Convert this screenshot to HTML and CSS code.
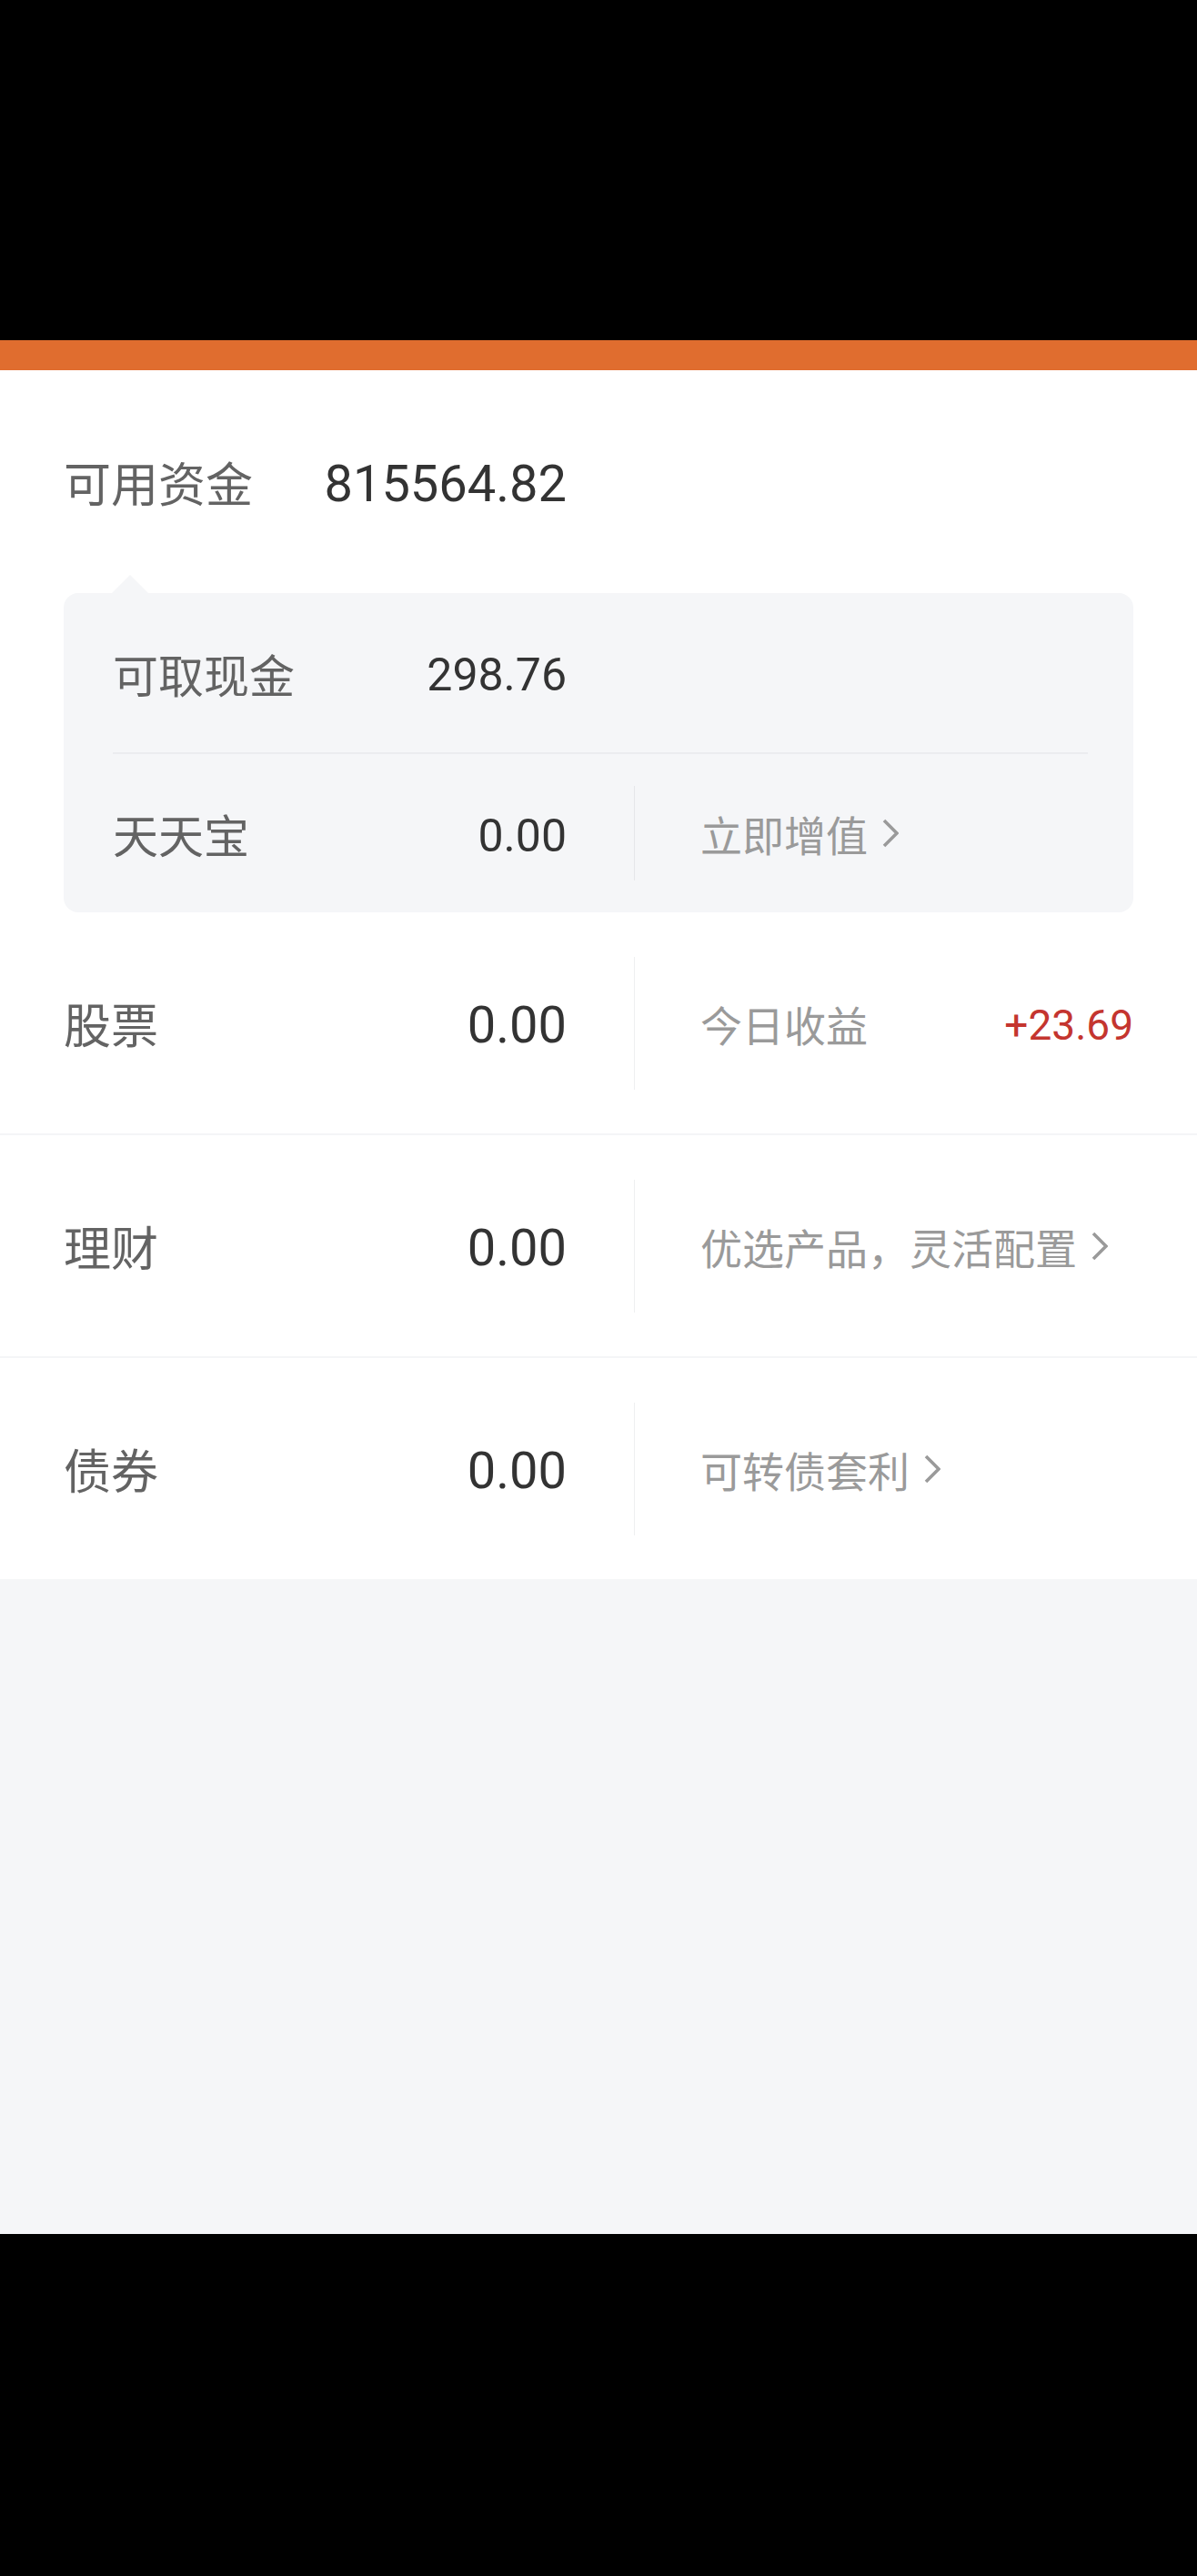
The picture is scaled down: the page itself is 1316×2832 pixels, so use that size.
FILE: index.html
```html
<!DOCTYPE html>
<html lang="zh-CN">

<head>
    <meta charset="UTF-8">
    <title>资产</title>
    <link rel="stylesheet" href="styles.css">
</head>

<body>
    <div class="status-bar"></div>
    <div class="top-line"></div>
    <div class="assets">
        <div class="total">
            <div class="main">
                <span class="name">可用资金</span>
                <span class="num">815564.82</span>
            </div>
        </div>
        <div class="cash-card">
            <div class="card-row">
                <div class="main card-main">
                    <span class="name name-sm">可取现金</span>
                    <span class="num num-sm">298.76</span>
                </div>
            </div>
            <div class="card-row">
                <div class="main card-main">
                    <span class="name name-sm">天天宝</span>
                    <span class="num num-sm">0.00</span>
                </div>
                <i class="vline vline-sm"></i>
                <a class="link">立即增值<svg width="18" height="32" viewBox="0 0 18 32"><polyline points="2,2 16,16 2,30" fill="none" stroke="#9a9a9a" stroke-width="3.6"/></svg></a>
            </div>
        </div>
        <div class="item">
            <div class="main">
                <span class="name">股票</span>
                <span class="num">0.00</span>
            </div>
            <i class="vline"></i>
            <div class="extra">
                <span>今日收益</span>
                <span class="gain">+23.69</span>
            </div>
        </div>
        <div class="item">
            <div class="main">
                <span class="name">理财</span>
                <span class="num">0.00</span>
            </div>
            <i class="vline"></i>
            <a class="link">优选产品，灵活配置<svg width="18" height="32" viewBox="0 0 18 32"><polyline points="2,2 16,16 2,30" fill="none" stroke="#9a9a9a" stroke-width="3.6"/></svg></a>
        </div>
        <div class="item">
            <div class="main">
                <span class="name">债券</span>
                <span class="num">0.00</span>
            </div>
            <i class="vline"></i>
            <a class="link">可转债套利<svg width="18" height="32" viewBox="0 0 18 32"><polyline points="2,2 16,16 2,30" fill="none" stroke="#9a9a9a" stroke-width="3.6"/></svg></a>
        </div>
    </div>
    <div class="blank"></div>
</body>

</html>
```

FILE: styles.css
```css
* {
    margin: 0;
    padding: 0;
    box-sizing: border-box;
}

body {
    background: #000;
    font-family: Roboto, "Noto Sans CJK SC", sans-serif;
}

.status-bar {
    height: 374px;
    background: #000;
}

.top-line {
    height: 33px;
    background: #e06d2f;
}

.assets {
    background: #fff;
}

.total {
    height: 245px;
    display: flex;
    align-items: center;
    padding-left: 70px;
}

.main {
    width: 553px;
    display: flex;
    justify-content: space-between;
    align-items: center;
}

.card-main {
    width: 499px;
}

.name {
    font-family: "Noto Sans CJK SC", sans-serif;
    font-size: 52px;
    line-height: 1;
    color: #636363;
}

.name-sm {
    font-size: 50px;
}

.num {
    padding-top: 5px;
    font-family: Roboto, sans-serif;
    font-size: 56px;
    line-height: 1;
    color: #333;
}

.num-sm {
    font-size: 50px;
}

/* 可取现金卡片 */
.cash-card {
    position: relative;
    margin: 0 70px;
    padding: 0 50px 0 54px;
    background: #f5f6f8;
    border-radius: 16px;
}

.cash-card::before {
    content: "";
    position: absolute;
    left: 53px;
    top: -20px;
    border-style: solid;
    border-color: transparent;
    border-width: 0 20px 20px;
    border-bottom-color: #f5f6f8;
}

.card-row {
    height: 175px;
    display: flex;
    align-items: center;
}

.card-row + .card-row {
    height: 176px;
    border-top: 2px solid #ebecef;
}

.vline {
    width: 1px;
    height: 146px;
    margin: 0 72px 0 74px;
    background: #eeeff1;
}

.vline-sm {
    height: 104px;
    background: #e6e7ea;
}

.item {
    height: 245px;
    display: flex;
    align-items: center;
    padding: 0 70px;
    border-bottom: 2px solid #f4f5f7;
}

.item:last-child {
    height: 243px;
    border-bottom: 0;
}

.extra {
    flex: 1;
    display: flex;
    justify-content: space-between;
    align-items: center;
    font-family: "Noto Sans CJK SC", sans-serif;
    font-size: 46px;
    line-height: 1;
    color: #9a9a9a;
}

.gain {
    padding-top: 4px;
    font-family: Roboto, sans-serif;
    color: #c4352f;
}

.link {
    display: flex;
    align-items: center;
    font-family: "Noto Sans CJK SC", sans-serif;
    font-size: 46px;
    line-height: 1;
    color: #9a9a9a;
}

.link svg {
    margin-left: 16px;
}

.blank {
    height: 720px;
    background: #f5f6f8;
}
```
